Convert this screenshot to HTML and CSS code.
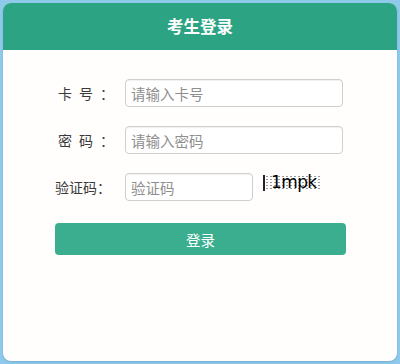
FILE: index.html
```html
<!DOCTYPE html>
<html lang="zh-CN">
<head>
<meta charset="utf-8">
<title>考生登录</title>
<link rel="stylesheet" href="styles.css">
</head>
<body>
<div class="card">
  <div class="card-header">考生登录</div>
  <form class="login-form">
    <div class="row">
      <label class="label spaced">卡号：</label>
      <input class="field" type="text" placeholder="请输入卡号">
    </div>
    <div class="row">
      <label class="label spaced">密码：</label>
      <input class="field" type="password" placeholder="请输入密码">
    </div>
    <div class="row">
      <label class="label">验证码：</label>
      <input class="field short" type="text" placeholder="验证码">
      <span class="captcha">1mpk</span>
    </div>
    <button class="submit" type="button">登录</button>
  </form>
</div>
</body>
</html>
```

FILE: styles.css
```css
html, body {
  margin: 0;
  padding: 0;
}
body {
  width: 400px;
  height: 364px;
  background: #8fcaeb;
  font-family: "Liberation Sans", "Noto Sans CJK SC", sans-serif;
  box-sizing: border-box;
  padding: 3px 3px 3px 3px;
}
.card {
  height: 358px;
  background: #fffefc;
  border-radius: 8px;
  overflow: hidden;
  box-shadow: 0 1px 2px rgba(60, 120, 170, 0.35);
}
.card-header {
  height: 47px;
  background: #2ca383;
  color: #fff;
  font-family: "Noto Sans CJK SC", sans-serif;
  font-weight: bold;
  font-size: 16.5px;
  line-height: 47px;
  text-align: center;
}
.login-form {
  display: flex;
  flex-direction: column;
  padding: 29px 0 0 52px;
}
.row {
  display: flex;
  align-items: center;
  height: 28px;
  margin-bottom: 19px;
}
.label {
  width: 70px;
  font-family: "Noto Sans CJK SC", sans-serif;
  font-size: 14px;
  color: #3a3a3a;
  white-space: nowrap;
}
.label.spaced {
  letter-spacing: 7px;
  padding-left: 3px;
  width: 67px;
}
.field {
  box-sizing: border-box;
  width: 218px;
  height: 28px;
  border: 1px solid #cfcfcf;
  border-radius: 4px;
  padding: 0 5px;
  font-family: "Noto Sans CJK SC", sans-serif;
  font-size: 14.5px;
  color: #333;
  background: #fff;
  box-shadow: inset 0 1px 1px rgba(0, 0, 0, 0.06);
  outline: none;
}
.field::placeholder {
  color: #8e8e8e;
}
.field.short {
  width: 128px;
}
.captcha {
  align-self: flex-start;
  margin: 2px 0 0 10px;
  width: 58px;
  height: 16px;
  box-sizing: border-box;
  border-left: 2px solid #222;
  background-color: #fff;
  background-image: radial-gradient(#999 0.5px, transparent 0.7px);
  background-size: 4px 3px;
  font-family: "DejaVu Sans", sans-serif;
  font-size: 17px;
  line-height: 15px;
  color: #000;
  padding-left: 6px;
  letter-spacing: -0.6px;
  overflow: visible;
  white-space: nowrap;
}
.submit {
  margin-top: 3px;
  width: 291px;
  height: 32px;
  border: none;
  border-radius: 4px;
  background: #3aae8f;
  color: #fff;
  font-family: "Noto Sans CJK SC", sans-serif;
  font-size: 14.5px;
  cursor: pointer;
}
```
